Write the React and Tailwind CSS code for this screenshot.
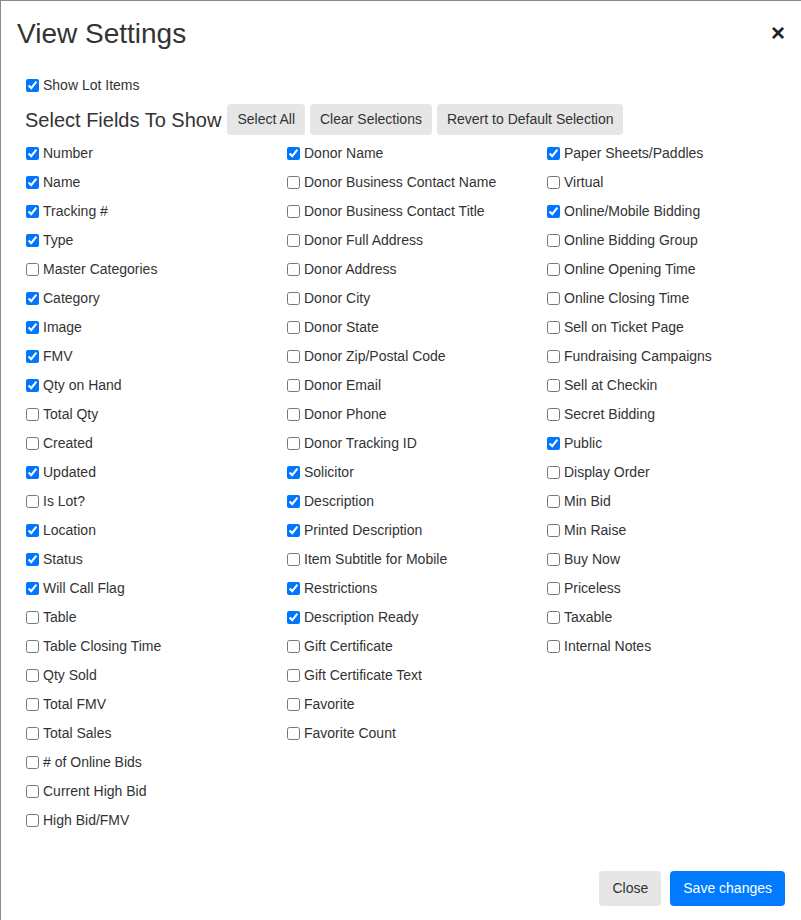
import React from "react";

const col1 = [
  ["Number", true], ["Name", true], ["Tracking #", true], ["Type", true],
  ["Master Categories", false], ["Category", true], ["Image", true], ["FMV", true],
  ["Qty on Hand", true], ["Total Qty", false], ["Created", false], ["Updated", true],
  ["Is Lot?", false], ["Location", true], ["Status", true], ["Will Call Flag", true],
  ["Table", false], ["Table Closing Time", false], ["Qty Sold", false], ["Total FMV", false],
  ["Total Sales", false], ["# of Online Bids", false], ["Current High Bid", false], ["High Bid/FMV", false],
];
const col2 = [
  ["Donor Name", true], ["Donor Business Contact Name", false], ["Donor Business Contact Title", false],
  ["Donor Full Address", false], ["Donor Address", false], ["Donor City", false], ["Donor State", false],
  ["Donor Zip/Postal Code", false], ["Donor Email", false], ["Donor Phone", false], ["Donor Tracking ID", false],
  ["Solicitor", true], ["Description", true], ["Printed Description", true], ["Item Subtitle for Mobile", false],
  ["Restrictions", true], ["Description Ready", true], ["Gift Certificate", false], ["Gift Certificate Text", false],
  ["Favorite", false], ["Favorite Count", false],
];
const col3 = [
  ["Paper Sheets/Paddles", true], ["Virtual", false], ["Online/Mobile Bidding", true], ["Online Bidding Group", false],
  ["Online Opening Time", false], ["Online Closing Time", false], ["Sell on Ticket Page", false],
  ["Fundraising Campaigns", false], ["Sell at Checkin", false], ["Secret Bidding", false], ["Public", true],
  ["Display Order", false], ["Min Bid", false], ["Min Raise", false], ["Buy Now", false], ["Priceless", false],
  ["Taxable", false], ["Internal Notes", false],
];

function Check({ label, checked }) {
  return (
    <label className="flex h-[29px] items-center gap-[4px] pl-[1px] text-[14px] text-[#333]">
      <input type="checkbox" defaultChecked={checked} className="m-0 h-[13px] w-[13px]" />
      <span>{label}</span>
    </label>
  );
}

function Btn({ children }) {
  return (
    <button className="flex h-[31px] items-center rounded-[4px] bg-[#e6e6e6] px-[10px] text-[14px] text-[#333]">
      {children}
    </button>
  );
}

export default function App() {
  return (
    <div
      className="flex h-[920px] w-[801px] flex-col overflow-hidden border-l border-t border-[#8a8a8a] bg-white text-[#333]"
      style={{ fontFamily: '"Liberation Sans", Arial, sans-serif' }}
    >
      <div className="flex h-[66px] items-start justify-between pl-[16px] pr-[16px] pt-[16px]">
        <h4 className="text-[28px] leading-[34px] text-[#333]">View Settings</h4>
        <button className="mt-[1px] text-[24px] font-bold leading-[30px] text-[#222]">×</button>
      </div>
      <div className="flex-1 pl-[24px]">
        <div className="mt-[4px]">
          <Check label="Show Lot Items" checked={true} />
        </div>
        <div className="mt-[4px] flex h-[31px] items-center">
          <span className="mr-[6px] text-[20px] leading-[24px] text-[#333]">Select Fields To Show</span>
          <div className="flex gap-[5px]">
            <Btn>Select All</Btn>
            <Btn>Clear Selections</Btn>
            <Btn>Revert to Default Selection</Btn>
          </div>
        </div>
        <div className="mt-[4px] grid grid-cols-[261px_260px_1fr]">
          <div className="flex flex-col">
            {col1.map(([l, c]) => <Check key={l} label={l} checked={c} />)}
          </div>
          <div className="flex flex-col">
            {col2.map(([l, c]) => <Check key={l} label={l} checked={c} />)}
          </div>
          <div className="flex flex-col">
            {col3.map(([l, c]) => <Check key={l} label={l} checked={c} />)}
          </div>
        </div>
      </div>
      <div className="flex justify-end gap-[9px] pb-[14px] pr-[16px]">
        <button className="h-[35px] rounded-[4px] bg-[#e6e6e6] px-[13px] text-[14px] text-[#333]">Close</button>
        <button className="h-[35px] rounded-[4px] bg-[#007bff] px-[13px] text-[14px] text-white">Save changes</button>
      </div>
    </div>
  );
}
